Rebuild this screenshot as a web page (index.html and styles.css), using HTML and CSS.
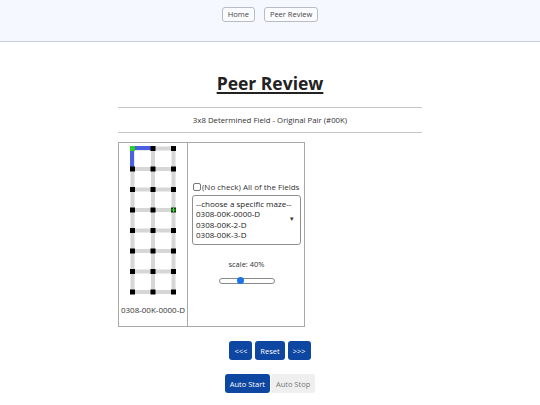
FILE: index.html
```html
<!DOCTYPE html>
<html lang="en">
<head>
<meta charset="utf-8">
<title>Peer Review</title>
<link rel="stylesheet" href="styles.css">
</head>
<body>
<header class="topbar">
  <button class="nav-btn">Home</button>
  <button class="nav-btn">Peer Review</button>
</header>
<main class="page">
  <h1 class="title">Peer Review</h1>
  <hr class="rule">
  <p class="subtitle">3x8 Determined Field - Original Pair (#00K)</p>
  <hr class="rule">
  <div class="board">
    <div class="maze-cell">
      <svg class="maze" width="56" height="156" viewBox="0 0 56 156">
        <g stroke="#d6d6d6" stroke-width="4">
          <line x1="7.5" y1="5.5" x2="48.5" y2="5.5"/>
          <line x1="7.5" y1="26" x2="48.5" y2="26"/>
          <line x1="7.5" y1="46.5" x2="48.5" y2="46.5"/>
          <line x1="7.5" y1="67" x2="48.5" y2="67"/>
          <line x1="7.5" y1="87.5" x2="48.5" y2="87.5"/>
          <line x1="7.5" y1="108" x2="48.5" y2="108"/>
          <line x1="7.5" y1="128.5" x2="48.5" y2="128.5"/>
          <line x1="7.5" y1="149" x2="48.5" y2="149"/>
          <line x1="7.5" y1="5.5" x2="7.5" y2="149"/>
          <line x1="28" y1="5.5" x2="28" y2="149"/>
          <line x1="48.5" y1="5.5" x2="48.5" y2="149"/>
        </g>
        <g stroke="#4a5fe2" stroke-width="4">
          <line x1="7" y1="5" x2="28" y2="5"/>
          <line x1="7" y1="5" x2="7" y2="26"/>
        </g>
        <g fill="#000">
          <rect x="25.5" y="3" width="5" height="5"/><rect x="46" y="3" width="5" height="5"/>
          <rect x="5" y="23.5" width="5" height="5"/><rect x="25.5" y="23.5" width="5" height="5"/><rect x="46" y="23.5" width="5" height="5"/>
          <rect x="5" y="44" width="5" height="5"/><rect x="25.5" y="44" width="5" height="5"/><rect x="46" y="44" width="5" height="5"/>
          <rect x="5" y="64.5" width="5" height="5"/><rect x="25.5" y="64.5" width="5" height="5"/>
          <rect x="5" y="85" width="5" height="5"/><rect x="25.5" y="85" width="5" height="5"/><rect x="46" y="85" width="5" height="5"/>
          <rect x="5" y="105.5" width="5" height="5"/><rect x="25.5" y="105.5" width="5" height="5"/><rect x="46" y="105.5" width="5" height="5"/>
          <rect x="5" y="126" width="5" height="5"/><rect x="25.5" y="126" width="5" height="5"/><rect x="46" y="126" width="5" height="5"/>
          <rect x="5" y="146.5" width="5" height="5"/><rect x="25.5" y="146.5" width="5" height="5"/><rect x="46" y="146.5" width="5" height="5"/>
        </g>
        <rect x="5" y="3" width="5" height="5" fill="#2bd02b"/>
        <rect x="46" y="64.5" width="5" height="5" fill="#0c3f0c"/>
        <g stroke="#3fe03f" stroke-width="1">
          <line x1="46.5" y1="67" x2="50.5" y2="67"/>
          <line x1="48.5" y1="65" x2="48.5" y2="69"/>
        </g>
      </svg>
      <div class="maze-label">0308-00K-0000-D</div>
    </div>
    <div class="control-cell">
      <label class="check"><input type="checkbox" class="check-box"><span>(No check) All of the Fields</span></label>
      <div class="listbox">
        <div class="options">
          <div>--choose a specific maze--</div>
          <div>0308-00K-0000-D</div>
          <div>0308-00K-2-D</div>
          <div>0308-00K-3-D</div>
          <div>0308-00K-4-D</div>
        </div>
        <span class="caret">&#9662;</span>
      </div>
      <div class="scale-label">scale: 40%</div>
      <input type="range" class="scale" min="0" max="100" value="37">
    </div>
  </div>
  <div class="btn-row">
    <button class="btn primary">&lt;&lt;&lt;</button>
    <button class="btn primary">Reset</button>
    <button class="btn primary">&gt;&gt;&gt;</button>
  </div>
  <div class="btn-row tight">
    <button class="btn primary">Auto Start</button>
    <button class="btn muted">Auto Stop</button>
  </div>
</main>
</body>
</html>
```

FILE: styles.css
```css
* { box-sizing: border-box; }
html, body { margin: 0; padding: 0; background: #fff; }
body { font-family: "Open Sans", "Noto Sans", sans-serif; color: #333; }

.topbar {
  height: 42px;
  background: #f5f8ff;
  border-bottom: 1px solid #c8cbd8;
  display: flex;
  justify-content: center;
  align-items: flex-start;
  gap: 9px;
  padding-top: 7px;
}
.nav-btn {
  font-family: inherit;
  height: 15px;
  font-size: 7.5px;
  line-height: 13px;
  padding: 0 5px;
  color: #444;
  background: #fbfcff;
  border: 1px solid #b9bcc8;
  border-radius: 3px;
}

.page { width: 304px; margin: 0 auto; }

.title {
  margin: 27px 0 0;
  font-size: 17.5px;
  line-height: 28px;
  font-weight: 700;
  text-align: center;
  color: #222;
  text-decoration: underline;
  text-decoration-thickness: 2px;
  text-underline-offset: 2px;
}
.rule { margin: 10px 0 0; border: 0; border-top: 1px solid #c6c6c6; height: 0; }
.rule + .subtitle { margin: 7px 0 6px; }
.subtitle {
  font-size: 7.8px;
  line-height: 11px;
  text-align: center;
  color: #333;
}
.subtitle + .rule { margin-top: 0; }

.board {
  margin-top: 9px;
  width: 187px;
  height: 185px;
  display: flex;
  border: 1px solid #a9a9a9;
}
.maze-cell {
  width: 69px;
  border-right: 1px solid #a9a9a9;
  display: flex;
  flex-direction: column;
  align-items: center;
}
.maze { display: block; margin-top: 0; }
.maze-label {
  margin-top: 5px;
  font-size: 8px;
  line-height: 11px;
  color: #333;
}
.control-cell {
  flex: 1;
  display: flex;
  flex-direction: column;
  justify-content: center;
  align-items: center;
  padding: 0 3px 4px 4px;
}
.check {
  align-self: flex-start;
  display: flex;
  align-items: center;
  font-size: 8px;
  line-height: 10px;
  color: #333;
}
.check-box {
  appearance: none;
  margin: 0 1px 0 1px;
  width: 8px;
  height: 8px;
  border: 1px solid #777;
  border-radius: 2px;
  background: #fff;
}
.listbox {
  align-self: stretch;
  margin-top: 3px;
  height: 50px;
  border: 1px solid #8f8f8f;
  border-radius: 3px;
  position: relative;
  overflow: hidden;
  padding: 3px 0 0 3px;
}
.options { font-size: 8px; line-height: 10.5px; color: #222; }
.caret {
  position: absolute;
  right: 6px;
  top: 18px;
  font-size: 7px;
  color: #333;
}
.scale-label {
  margin-top: 14px;
  font-size: 7.5px;
  line-height: 10px;
  color: #333;
}
.scale {
  appearance: none;
  margin: 9px 0 0;
  width: 56px;
  height: 6px;
  border: 1px solid #888;
  border-radius: 3px;
  background: #fff;
}
.scale::-webkit-slider-thumb {
  appearance: none;
  width: 7px;
  height: 7px;
  border-radius: 50%;
  background: #1a73e8;
}

.btn-row {
  display: flex;
  justify-content: center;
  gap: 3px;
  margin-top: 14px;
}
.btn-row.tight { gap: 1px; margin-top: 14px; }
.btn {
  font-family: inherit;
  height: 19px;
  font-size: 7.5px;
  padding: 0 5px;
  border-radius: 3px;
  border: 0;
}
.btn.primary { background: #0d47a1; color: #fff; }
.btn.muted { background: #efefef; color: #777; }
```
